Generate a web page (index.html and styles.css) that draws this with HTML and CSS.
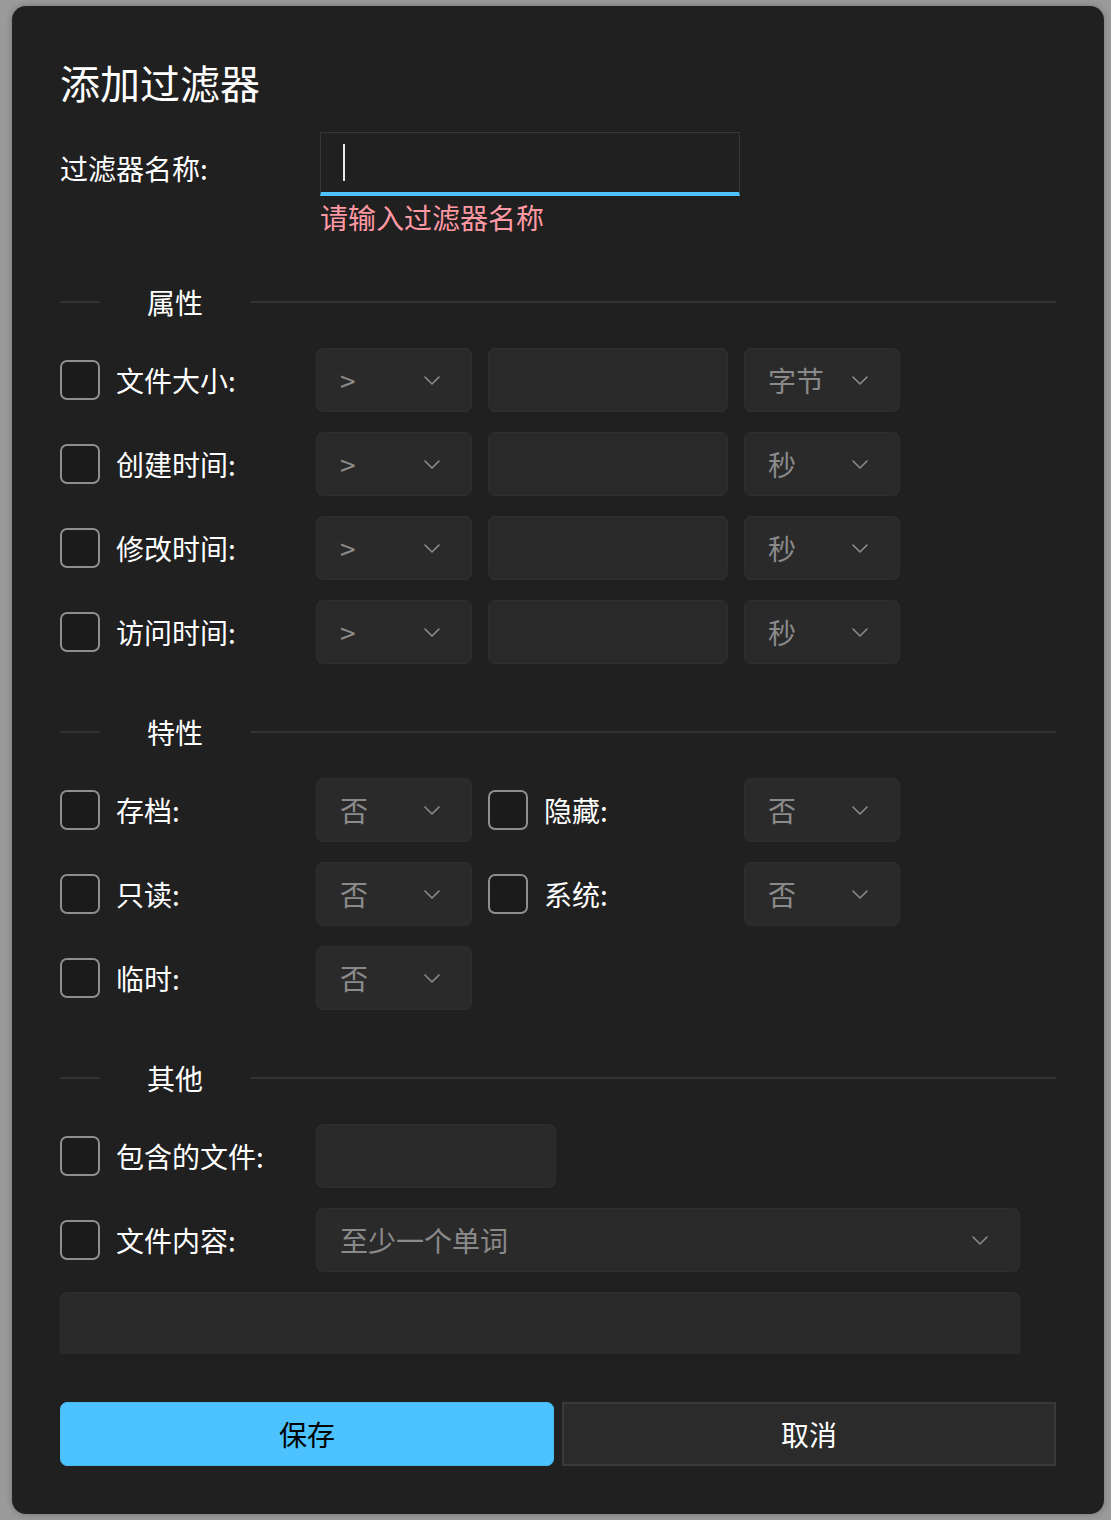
FILE: index.html
```html
<!DOCTYPE html>
<html lang="zh-CN">
<head>
<meta charset="utf-8">
<title>添加过滤器</title>
<link rel="stylesheet" href="styles.css">
</head>
<body>
<div class="dialog">
  <h1 class="title">添加过滤器</h1>

  <div class="name-row">
    <div class="name-label">过滤器名称:</div>
    <div class="name-field">
      <div class="text-input focused"><span class="caret"></span></div>
      <div class="error">请输入过滤器名称</div>
    </div>
  </div>

  <div class="section first">
    <span class="line short"></span><span class="section-title">属性</span><span class="line long"></span>
  </div>

  <div class="rows">
    <div class="row">
      <div class="check-cell"><span class="checkbox"></span><span class="label">文件大小:</span></div>
      <div class="select w156"><span class="val">&gt;</span><svg class="chev" viewBox="0 0 16 9"><polyline points="1,1 8,8 15,1"/></svg></div>
      <div class="field w240"></div>
      <div class="select w156"><span class="val">字节</span><svg class="chev" viewBox="0 0 16 9"><polyline points="1,1 8,8 15,1"/></svg></div>
    </div>
    <div class="row">
      <div class="check-cell"><span class="checkbox"></span><span class="label">创建时间:</span></div>
      <div class="select w156"><span class="val">&gt;</span><svg class="chev" viewBox="0 0 16 9"><polyline points="1,1 8,8 15,1"/></svg></div>
      <div class="field w240"></div>
      <div class="select w156"><span class="val">秒</span><svg class="chev" viewBox="0 0 16 9"><polyline points="1,1 8,8 15,1"/></svg></div>
    </div>
    <div class="row">
      <div class="check-cell"><span class="checkbox"></span><span class="label">修改时间:</span></div>
      <div class="select w156"><span class="val">&gt;</span><svg class="chev" viewBox="0 0 16 9"><polyline points="1,1 8,8 15,1"/></svg></div>
      <div class="field w240"></div>
      <div class="select w156"><span class="val">秒</span><svg class="chev" viewBox="0 0 16 9"><polyline points="1,1 8,8 15,1"/></svg></div>
    </div>
    <div class="row">
      <div class="check-cell"><span class="checkbox"></span><span class="label">访问时间:</span></div>
      <div class="select w156"><span class="val">&gt;</span><svg class="chev" viewBox="0 0 16 9"><polyline points="1,1 8,8 15,1"/></svg></div>
      <div class="field w240"></div>
      <div class="select w156"><span class="val">秒</span><svg class="chev" viewBox="0 0 16 9"><polyline points="1,1 8,8 15,1"/></svg></div>
    </div>
  </div>

  <div class="section">
    <span class="line short"></span><span class="section-title">特性</span><span class="line long"></span>
  </div>

  <div class="rows">
    <div class="row">
      <div class="check-cell"><span class="checkbox"></span><span class="label">存档:</span></div>
      <div class="select w156"><span class="val">否</span><svg class="chev" viewBox="0 0 16 9"><polyline points="1,1 8,8 15,1"/></svg></div>
      <div class="check-cell w240"><span class="checkbox"></span><span class="label">隐藏:</span></div>
      <div class="select w156"><span class="val">否</span><svg class="chev" viewBox="0 0 16 9"><polyline points="1,1 8,8 15,1"/></svg></div>
    </div>
    <div class="row">
      <div class="check-cell"><span class="checkbox"></span><span class="label">只读:</span></div>
      <div class="select w156"><span class="val">否</span><svg class="chev" viewBox="0 0 16 9"><polyline points="1,1 8,8 15,1"/></svg></div>
      <div class="check-cell w240"><span class="checkbox"></span><span class="label">系统:</span></div>
      <div class="select w156"><span class="val">否</span><svg class="chev" viewBox="0 0 16 9"><polyline points="1,1 8,8 15,1"/></svg></div>
    </div>
    <div class="row">
      <div class="check-cell"><span class="checkbox"></span><span class="label">临时:</span></div>
      <div class="select w156"><span class="val">否</span><svg class="chev" viewBox="0 0 16 9"><polyline points="1,1 8,8 15,1"/></svg></div>
    </div>
  </div>

  <div class="section">
    <span class="line short"></span><span class="section-title">其他</span><span class="line long"></span>
  </div>

  <div class="rows other">
    <div class="row">
      <div class="check-cell"><span class="checkbox"></span><span class="label">包含的文件:</span></div>
      <div class="field w240"></div>
    </div>
    <div class="row">
      <div class="check-cell"><span class="checkbox"></span><span class="label">文件内容:</span></div>
      <div class="select w704"><span class="val">至少一个单词</span><svg class="chev" viewBox="0 0 16 9"><polyline points="1,1 8,8 15,1"/></svg></div>
    </div>
    <div class="content-box"></div>
  </div>

  <div class="buttons">
    <button class="btn primary">保存</button>
    <button class="btn secondary">取消</button>
  </div>
</div>
</body>
</html>
```
FILE: styles.css
```css
html, body {
  margin: 0;
  padding: 0;
}

body {
  background: #9a9a9a;
  font-family: "Noto Sans CJK SC", "Noto Sans", sans-serif;
  color: #ffffff;
  width: 1111px;
  height: 1520px;
  overflow: hidden;
}

.dialog {
  box-sizing: border-box;
  width: 1092px;
  height: 1508px;
  margin: 6px 0 0 12px;
  background: #202020;
  border-radius: 14px;
  padding: 52px 48px 0 48px;
  box-shadow: 0 0 6px rgba(0, 0, 0, 0.25);
}

.title {
  margin: 0 0 26px 0;
  font-size: 40px;
  font-weight: normal;
  line-height: 48px;
  height: 48px;
  color: #ffffff;
}

.name-row {
  display: flex;
  align-items: flex-start;
}

.name-label {
  width: 260px;
  font-size: 28px;
  line-height: 40px;
  margin-top: 16px;
}

.name-field {
  width: 420px;
}

.text-input {
  box-sizing: border-box;
  height: 64px;
  border: 1px solid #363636;
  border-bottom: 4px solid #4cc2ff;
  background: #202020;
  padding: 11px 0 0 22px;
}

.caret {
  display: block;
  width: 2px;
  height: 37px;
  background: #e8e8e8;
}

.error {
  margin-top: 1px;
  font-size: 28px;
  line-height: 40px;
  color: #ff99a4;
}

.section {
  display: flex;
  align-items: center;
  height: 40px;
  margin-top: 48px;
  margin-bottom: 26px;
}

.section.first {
  margin-top: 45px;
  margin-bottom: 26px;
}

.line {
  height: 2px;
  background: #323232;
}

.line.short {
  width: 40px;
}

.line.long {
  flex: 1;
}

.section-title {
  font-size: 28px;
  line-height: 40px;
  padding: 0 48px 0 47px;
}

.rows {
  display: flex;
  flex-direction: column;
  gap: 20px;
}

.row {
  display: flex;
  align-items: center;
  gap: 16px;
  height: 64px;
}

.check-cell {
  width: 240px;
  display: flex;
  align-items: center;
  gap: 16px;
  height: 64px;
}

.checkbox {
  box-sizing: border-box;
  width: 40px;
  height: 40px;
  border: 2px solid #8e8e8e;
  border-radius: 7px;
  background: #1b1b1b;
  flex: none;
}

.label {
  font-size: 28px;
  line-height: 40px;
  color: #ffffff;
  white-space: nowrap;
}

.select, .field {
  box-sizing: border-box;
  height: 64px;
  background: #2a2a2a;
  border: 1px solid #2f2f2f;
  border-radius: 7px;
  flex: none;
}

.select {
  display: flex;
  align-items: center;
  justify-content: space-between;
  padding: 0 31px 0 23px;
}

.val {
  font-size: 28px;
  line-height: 40px;
  color: #8a8a8a;
  white-space: nowrap;
}

.chev {
  width: 16px;
  height: 9px;
  fill: none;
  stroke: #8a8a8a;
  stroke-width: 1.6;
  stroke-linecap: round;
  stroke-linejoin: round;
}

.w156 { width: 156px; }
.w240 { width: 240px; }
.w704 { width: 704px; }

.other .row .check-cell {
  width: 240px;
}

.content-box {
  box-sizing: border-box;
  width: 960px;
  height: 62px;
  background: #2a2a2a;
  border: 1px solid #2f2f2f;
  border-bottom: none;
  border-radius: 7px 7px 0 0;
}

.buttons {
  display: flex;
  gap: 8px;
  margin-top: 48px;
}

.btn {
  box-sizing: border-box;
  width: 494px;
  height: 64px;
  font-family: "Noto Sans CJK SC", "Noto Sans", sans-serif;
  font-size: 28px;
  line-height: 40px;
  padding: 0;
  cursor: pointer;
}

.btn.primary {
  background: #4cc2ff;
  color: #000000;
  border: 1px solid #4ab8f2;
  border-radius: 7px;
}

.btn.secondary {
  background: #2b2b2b;
  color: #ffffff;
  border: 2px solid #3a3a3a;
  border-radius: 0;
}
```
